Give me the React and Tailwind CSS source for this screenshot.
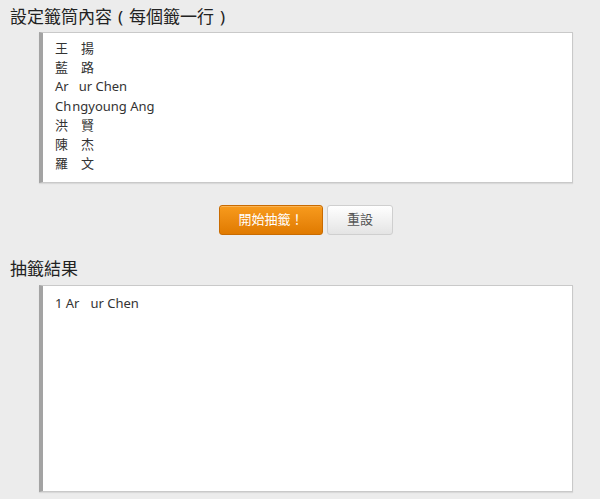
import React from 'react';

const FONT = { fontFamily: '"Noto Sans", "Noto Sans CJK TC", sans-serif' };

function Gap({ w }) {
  return <span className="inline-block" style={{ width: w }} />;
}

const NAMES = [
  <>王　揚</>,
  <>藍　路</>,
  <>Ar<Gap w={10} />ur Chen</>,
  <>Ch<Gap w={1} />ngyoung Ang</>,
  <>洪　賢</>,
  <>陳　杰</>,
  <>羅　文</>,
];

function Panel({ className, children }) {
  return (
    <div
      className={`ml-[39px] w-[534px] bg-white border border-[#c9c9c9] border-l-4 border-l-[#a3a3a3] shadow-[0_1px_1px_rgba(0,0,0,0.08)] pl-3 text-[13px] leading-[19.2px] text-[#333] ${className}`}
    >
      {children}
    </div>
  );
}

export default function App() {
  return (
    <div className="min-h-[499px] bg-[#ececec] pt-[5px]" style={FONT}>
      <h2 className="pl-[10px] text-[17px] leading-[24px] text-[#222]">
        設定籤筒內容<span className="mx-[6px]">(</span>每個籤一行<span className="mx-[6px]">)</span>
      </h2>
      <Panel className="mt-[3px] h-[151px] pt-[6px]">
        {NAMES.map((n, i) => (
          <div key={i}>{n}</div>
        ))}
      </Panel>

      <div className="ml-[39px] w-[534px] mt-[22px] flex justify-center gap-[4px]">
        <button className="w-[104px] h-[30px] rounded-[3px] border border-[#c96b00] bg-gradient-to-b from-[#f89b1c] to-[#e07a00] text-white text-[13px] shadow-[inset_0_1px_0_rgba(255,255,255,0.25)]">
          開始抽籤！
        </button>
        <button className="w-[66px] h-[30px] rounded-[3px] border border-[#cfcfcf] bg-gradient-to-b from-white to-[#e4e4e4] text-[#555] text-[13px]">
          重設
        </button>
      </div>

      <h2 className="pl-[10px] mt-[22px] text-[17px] leading-[24px] text-[#222]">抽籤結果</h2>
      <Panel className="mt-[4px] h-[207px] pt-[8px]">
        <div>1 Ar<Gap w={11} />ur Chen</div>
      </Panel>
    </div>
  );
}
